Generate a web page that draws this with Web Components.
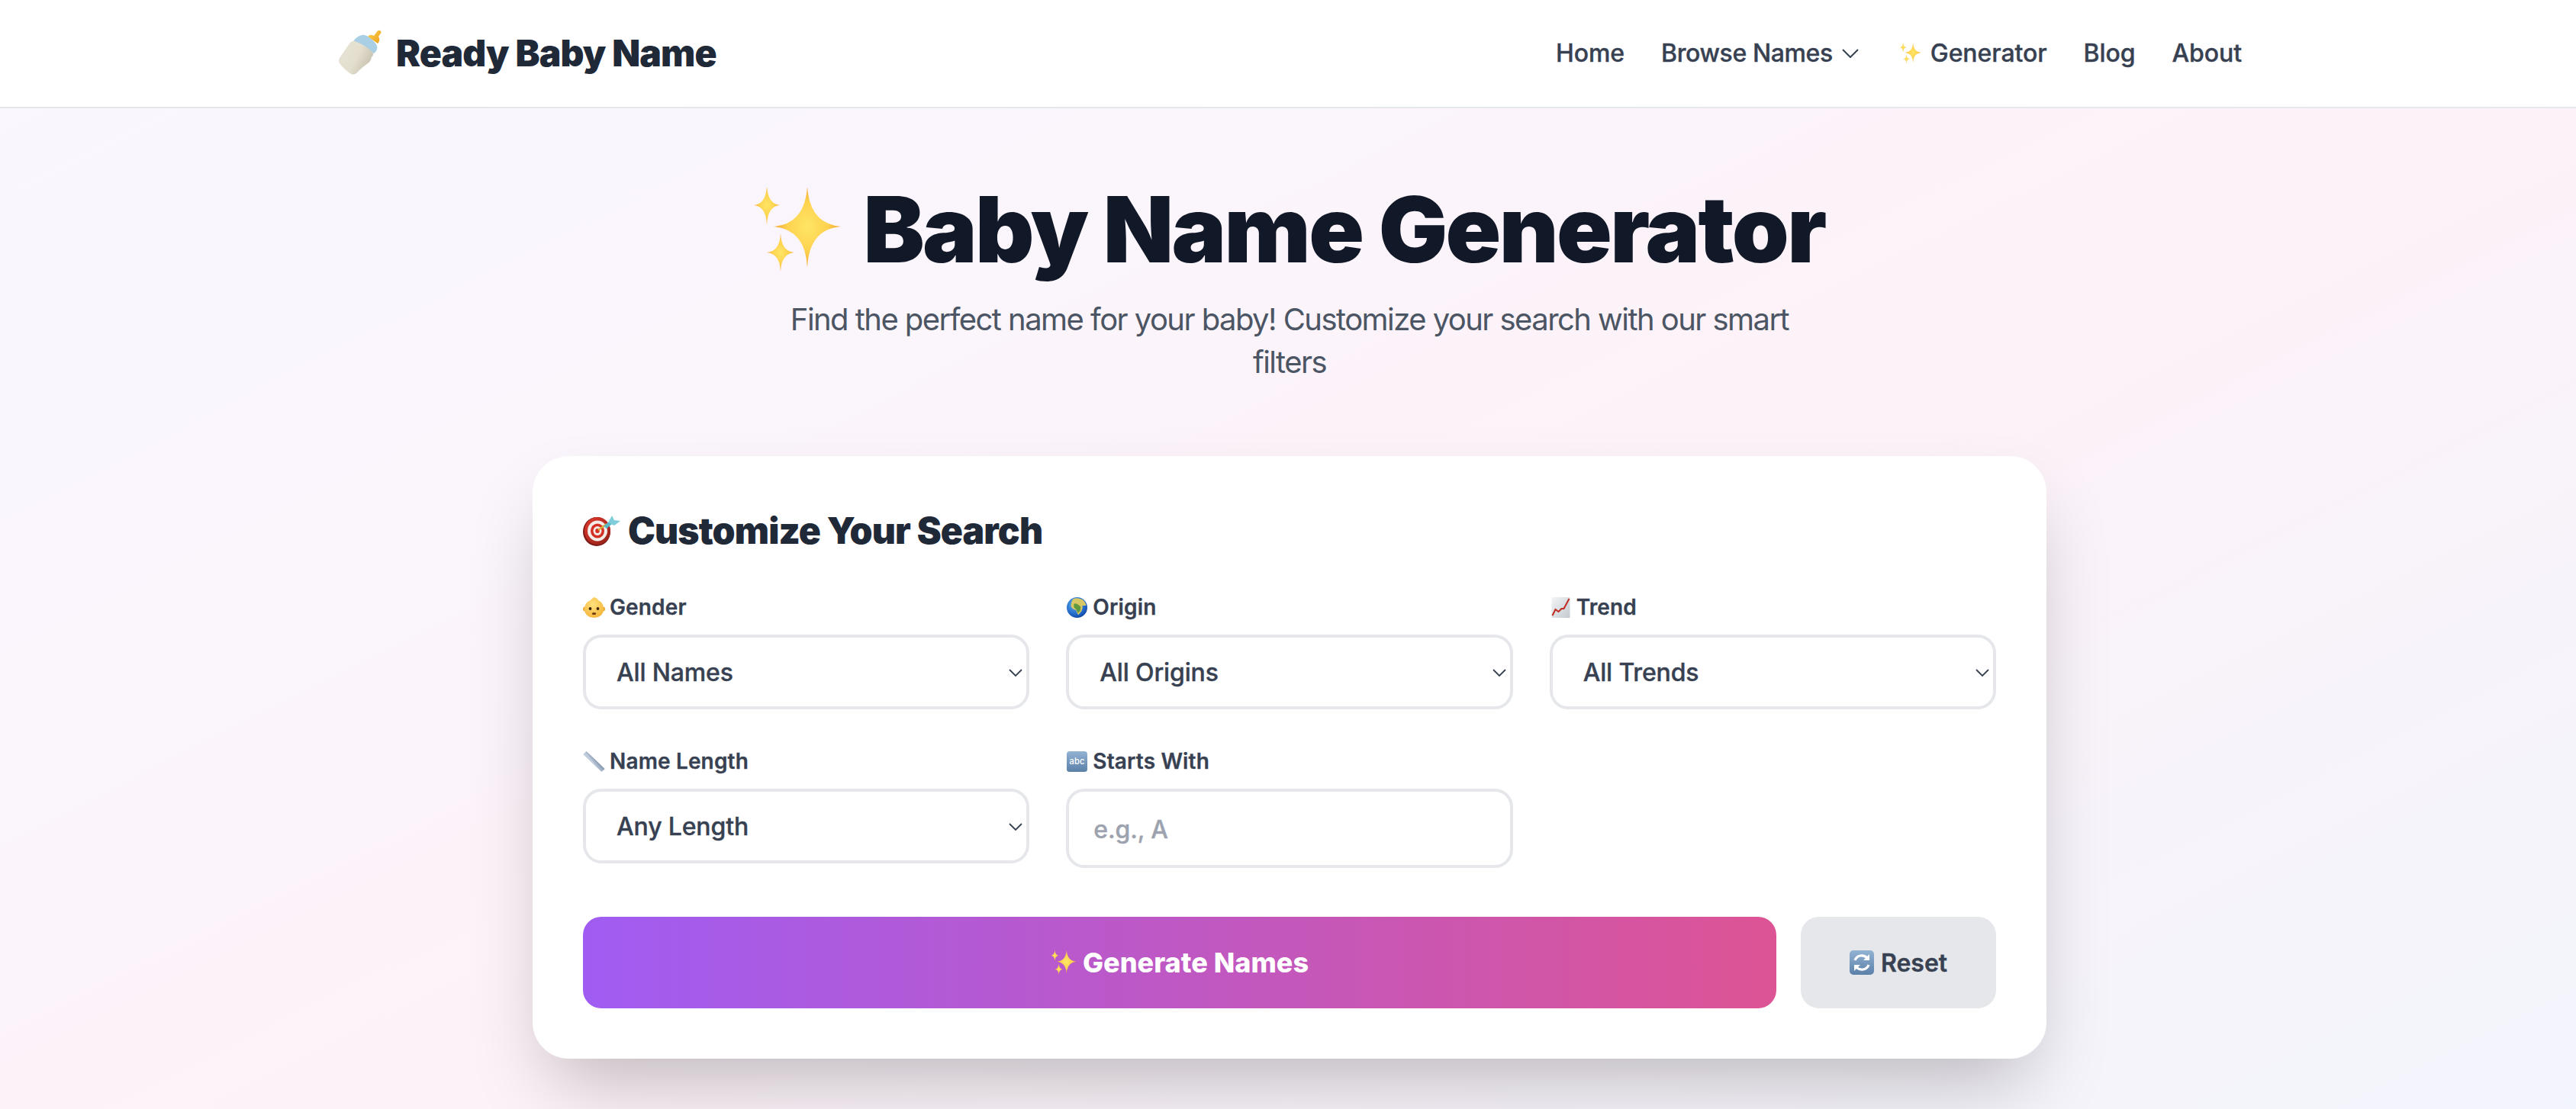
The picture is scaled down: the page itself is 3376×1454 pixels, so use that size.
<!DOCTYPE html>
<html lang="en"><head><meta charset="utf-8"><title>Ready Baby Name</title>
<style>
html,body{margin:0;height:100%;overflow:hidden}
body{font-family:Inter,"Noto Sans",sans-serif;background:linear-gradient(to bottom right,#f9f7ff,#fbf5fc 30%,#fdf2f8 50%,#f1f5fd) no-repeat;background-size:100% 1700px;background-color:#f3f4f9;color:#1f2937}
rb-main{display:block;padding-left:4px}
</style></head><body>
<rb-header></rb-header>
<rb-main>
<rb-hero></rb-hero>
<rb-card title-text="Customize Your Search" icon="dart">
  <rb-select label="Gender" icon="baby" value="All Names"></rb-select>
  <rb-select label="Origin" icon="globe" value="All Origins"></rb-select>
  <rb-select label="Trend" icon="chart" value="All Trends"></rb-select>
  <rb-select label="Name Length" icon="ruler" value="Any Length"></rb-select>
  <rb-text-field label="Starts With" icon="abc" placeholder="e.g., A"></rb-text-field>
  <rb-button slot="actions" kind="primary" icon="sparkles" text="Generate Names"></rb-button>
  <rb-button slot="actions" kind="secondary" icon="refresh" text="Reset"></rb-button>
</rb-card>
</rb-main>
<script>
const star=(c,x,y,rx,ry)=>{const a=rx*.05,b=ry*.07;return `<path fill="${c}" d="M${x} ${y-ry}Q${x+a} ${y-b} ${x+rx} ${y}Q${x+a} ${y+b} ${x} ${y+ry}Q${x-a} ${y+b} ${x-rx} ${y}Q${x-a} ${y-b} ${x} ${y-ry}Z"/>`};
const ICONS={
sparkles:{vb:'0 0 114 110',s:`<defs><radialGradient id="g" cx=".5" cy=".5" r=".55"><stop offset="0" stop-color="#ffe566"/><stop offset=".55" stop-color="#fdd24e"/><stop offset="1" stop-color="#f39a2d"/></radialGradient></defs>${star('url(#g)',70,51,44,54)}${star('url(#g)',17,23,17,26)}${star('url(#g)',35,85,18,25)}`},
bottle:{vb:'0 0 57 59',s:`<defs><linearGradient id="b" x1="0" y1="0" x2="1" y2=".5"><stop offset="0" stop-color="#e9e5d8"/><stop offset=".6" stop-color="#e3decd"/><stop offset="1" stop-color="#c9c4b2"/></linearGradient><linearGradient id="y" x1="0" y1="0" x2="1" y2="1"><stop offset="0" stop-color="#fad34a"/><stop offset="1" stop-color="#eb9e1e"/></linearGradient></defs>
<path fill="url(#y)" d="M39 9Q42 5 47 8L50 4Q52 0 55 1Q58 3 55 6L53 9Q56 14 52 18Z"/>
<path fill="#a9cfe4" d="M20 15Q24 9 31 7Q36 6 42 11Q49 16 51 21Q52 25 50 28L47 31Q36 22 20 15Z"/>
<path fill="url(#b)" d="M2 37L15 18Q18 14 22 15Q36 20 46 30Q47 33 44 36Q43 41 39 44Q31 50 27 54Q22 60 17 58Q8 52 2 44Q0 41 2 37Z"/>`},
dart:{vb:'0 0 49 40',s:`<defs><linearGradient id="d" x1="0" y1="0" x2="1" y2="1"><stop offset="0" stop-color="#e23a2d"/><stop offset="1" stop-color="#8f1f18"/></linearGradient></defs>
<ellipse cx="18" cy="21" rx="18" ry="19" fill="#7e1a15"/><ellipse cx="19" cy="20" rx="17" ry="18" fill="url(#d)"/><ellipse cx="19" cy="20" rx="13" ry="13.5" fill="#f4ece8"/><ellipse cx="19" cy="20" rx="9" ry="9.5" fill="#d42f25"/><ellipse cx="19" cy="20" rx="5.5" ry="6" fill="#f4ece8"/><ellipse cx="19" cy="20" rx="2.8" ry="3" fill="#d42f25"/>
<path d="M20 19L31 11" stroke="#d9b13c" stroke-width="2.4"/><path d="M27 14L34 8L38 11L31 17Z" fill="#58b7c9"/><path d="M33 9L38 0L41 6L49 7L41 13Z" fill="#7fcdd8"/>`},
baby:{vb:'0 0 29 27',s:`<defs><radialGradient id="f" cx=".45" cy=".35" r=".7"><stop offset="0" stop-color="#ffe27d"/><stop offset="1" stop-color="#f4b43a"/></radialGradient></defs>
<ellipse cx="2.500" cy="15.500" rx="2.500" ry="3" fill="#f0ac38"/><ellipse cx="26.500" cy="15.500" rx="2.500" ry="3" fill="#f0ac38"/><path fill="url(#f)" d="M14.500 0Q19 1 20 4Q27 7 27 15Q27 26 14.500 27Q2 26 2 15Q2 7 10 4Q12 1 14.500 0Z"/><circle cx="9.500" cy="15" r="1.900" fill="#3b2612"/><circle cx="19.500" cy="15" r="1.900" fill="#3b2612"/><ellipse cx="14.500" cy="21.500" rx="2.800" ry="1.500" fill="#6e3a12"/>`},
globe:{vb:'0 0 28 27',s:`<defs><radialGradient id="o" cx=".4" cy=".35" r=".75"><stop offset="0" stop-color="#5fb2ee"/><stop offset=".7" stop-color="#1f63c5"/><stop offset="1" stop-color="#0d3b8c"/></radialGradient></defs>
<ellipse cx="14" cy="13.500" rx="13.500" ry="13.500" fill="url(#o)"/><path fill="#d8c765" d="M9 2Q15 0 21 3Q25 6 26 11L21 11Q22 14 20 18L16 23Q14 22 13 17Q8 16 6 12Q6 6 9 2Z"/><path fill="#5f9a3e" d="M10 9Q13 7 17 11Q20 12 18 18L15 21Q14 17 12 15Q9 14 10 9Z"/>`},
chart:{vb:'0 0 24 27',s:`<defs><linearGradient id="p" x1="0" y1="0" x2="1" y2="1"><stop offset="0" stop-color="#f3f5f7"/><stop offset="1" stop-color="#c3c9cf"/></linearGradient></defs><rect width="24" height="27" fill="url(#p)"/><path d="M1 24L5 16L9 19L13 15L16 15L23 2" fill="none" stroke="#c02a22" stroke-width="2"/>`},
ruler:{vb:'0 0 28 27',s:`<path d="M0 4L4 0L28 23L24 27Z" fill="#a8b6c9"/><path d="M0 4L3 1L22 25L24 27Z" fill="#c2cddb"/><path d="M4 0L28 23L26 25L7 3Z" fill="#8ea1ba"/>`},
abc:{vb:'0 0 28 28',s:`<defs><linearGradient id="a" x1="0" y1="0" x2="0" y2="1"><stop offset="0" stop-color="#93b3d3"/><stop offset="1" stop-color="#5b80a8"/></linearGradient></defs><rect width="28" height="28" rx="4" fill="url(#a)"/><text x="14" y="18" font-family="Inter,sans-serif" font-size="11.500" font-weight="500" text-anchor="middle" fill="#fff">abc</text>`},
refresh:{vb:'0 0 32 32',s:`<defs><linearGradient id="r" x1="0" y1="0" x2="0" y2="1"><stop offset="0" stop-color="#93b3d3"/><stop offset="1" stop-color="#5b80a8"/></linearGradient></defs><rect width="32" height="32" rx="5" fill="url(#r)"/><g fill="none" stroke="#fff" stroke-width="3.200"><path d="M7 13A9.500 9.500 0 0 1 23 10"/><path d="M25 19A9.500 9.500 0 0 1 9 22"/></g><path fill="#fff" d="M26 5V13H18Z"/><path fill="#fff" d="M6 27V19H14Z"/>`}
};
class RbIcon extends HTMLElement{connectedCallback(){const i=ICONS[this.getAttribute('name')];const r=this.shadowRoot||this.attachShadow({mode:'open'});r.innerHTML=`<style>:host{display:inline-flex;flex:none;width:var(--w);height:var(--h)}svg{width:100%;height:100%;display:block}</style><svg viewBox="${i.vb}" aria-hidden="true">${i.s}</svg>`}}
customElements.define('rb-icon',RbIcon);

class RbHeader extends HTMLElement{constructor(){super();this.attachShadow({mode:'open'}).innerHTML=`<style>
:host{display:block;background:#fff;border-bottom:2px solid #e5e7eb}
.in{max-width:2496px;height:140px;margin:0 auto;display:flex;align-items:center;justify-content:space-between}
.logo{display:flex;align-items:center;gap:19px;font-size:48px;font-weight:900;color:#1f2937;letter-spacing:-.85px;margin-left:3px}
.logo span{padding-bottom:2px}
.logo rb-icon{--w:57px;--h:59px;margin-bottom:4px}
nav{display:flex;gap:48px;align-items:center;font-size:32px;font-weight:500;-webkit-text-stroke:.35px #374151;color:#374151;line-height:48px;margin-right:-2px;letter-spacing:-.08px}
a{color:inherit;text-decoration:none;display:flex;align-items:center}
.g rb-icon{--w:28px;--h:32px;margin-right:12px}
.b{letter-spacing:-.4px}
.c{margin-left:12px;margin-right:6px;width:22px;height:12px}
</style><div class="in"><a class="logo" href="#"><rb-icon name="bottle"></rb-icon><span>Ready Baby Name</span></a>
<nav><a href="#">Home</a><a class="b" href="#">Browse Names<svg class="c" viewBox="0 0 22 12" fill="none" stroke="#374151" stroke-width="2"><path d="M1 1L11 11L21 1"/></svg></a><a class="g" href="#"><rb-icon name="sparkles"></rb-icon>Generator</a><a href="#">Blog</a><a href="#">About</a></nav></div>`}}
customElements.define('rb-header',RbHeader);

class RbHero extends HTMLElement{constructor(){super();this.attachShadow({mode:'open'}).innerHTML=`<style>
:host{display:block;padding-top:96px;text-align:center}
h1{margin:0 0 27px;font-size:120px;line-height:126px;font-weight:900;color:#111827;display:flex;justify-content:center;align-items:center;gap:29px;letter-spacing:-2.6px}
h1 rb-icon{--w:114px;--h:110px}
p{margin:0 auto;max-width:1344px;font-size:40px;line-height:56px;color:#4b5563;letter-spacing:-1.55px}
</style><h1><rb-icon name="sparkles"></rb-icon><span>Baby Name Generator</span></h1><p>Find the perfect name for your baby! Customize your search with our smart filters</p>`}}
customElements.define('rb-hero',RbHero);

class RbCard extends HTMLElement{connectedCallback(){this.attachShadow({mode:'open'}).innerHTML=`<style>
:host{display:block;box-sizing:border-box;width:1984px;margin:95px auto 0;background:#fff;border:2px solid #fff;border-radius:48px;padding:64px;box-shadow:0 50px 100px -24px rgba(0,0,0,.25)}
h2{margin:0 0 48px;display:flex;align-items:center;gap:10px;font-size:48px;line-height:64px;font-weight:900;color:#1f2937;letter-spacing:-.85px}
h2 rb-icon{--w:49px;--h:40px}
.grid{display:grid;grid-template-columns:repeat(3,1fr);gap:48px}
.act{display:flex;gap:32px;margin-top:64px}
</style><h2><rb-icon name="${this.getAttribute('icon')}"></rb-icon><span>${this.getAttribute('title-text')}</span></h2><div class="grid"><slot></slot></div><div class="act"><slot name="actions"></slot></div>`}}
customElements.define('rb-card',RbCard);

const fieldCss=`:host{display:block}
label{display:flex;align-items:center;gap:6px;font-size:28px;line-height:40px;font-weight:600;-webkit-text-stroke:.3px #374151;color:#374151;letter-spacing:.15px;margin-bottom:16px;white-space:nowrap}
label rb-icon{--w:29px;--h:27px}
.box{position:relative}
select,input{display:block;box-sizing:border-box;width:100%;border:4px solid #e5e7eb;border-radius:24px;background:#fff;font:500 32px Inter,sans-serif;letter-spacing:-.15px;color:#374151;outline:none;margin:0}
select{appearance:none;height:98px;padding:0 40px;-webkit-text-stroke:.35px #374151}
input{height:104px;padding:2px 32px 0;-webkit-text-stroke:.35px #9ca3af}
input::placeholder{color:#9ca3af;opacity:1}
svg.c{position:absolute;right:9px;top:45px;width:18px;height:10px;pointer-events:none}`;
class RbSelect extends HTMLElement{connectedCallback(){const l=this.getAttribute('label'),v=this.getAttribute('value'),i=this.getAttribute('icon');this.attachShadow({mode:'open'}).innerHTML=`<style>${fieldCss}</style><label><rb-icon name="${i}"></rb-icon>${l}</label><div class="box"><select aria-label="${l}"><option>${v}</option></select><svg class="c" viewBox="0 0 18 10" fill="none" stroke="#374151" stroke-width="1.800"><path d="M1 1L9 9L17 1"/></svg></div>`}}
customElements.define('rb-select',RbSelect);
class RbTextField extends HTMLElement{connectedCallback(){const l=this.getAttribute('label'),p=this.getAttribute('placeholder'),i=this.getAttribute('icon');this.attachShadow({mode:'open'}).innerHTML=`<style>${fieldCss}</style><label><rb-icon name="${i}"></rb-icon>${l}</label><div class="box"><input type="text" placeholder="${p}" aria-label="${l}"></div>`}}
customElements.define('rb-text-field',RbTextField);
class RbButton extends HTMLElement{connectedCallback(){const k=this.getAttribute('kind');this.attachShadow({mode:'open'}).innerHTML=`<style>
:host{display:block;${k==='primary'?'flex:1':'flex:none;width:256px'}}
button{width:100%;height:120px;border:0;border-radius:24px;display:flex;align-items:center;justify-content:center;font-family:Inter,sans-serif;margin:0;padding:0;cursor:pointer}
.primary{background:linear-gradient(to right,#a05cf2,#dd5495);color:#fff;font-size:36px;font-weight:800;gap:8px;letter-spacing:0}
.primary rb-icon{--w:34px;--h:32px}
.secondary{background:#e5e7eb;color:#374151;font-size:32px;font-weight:600;-webkit-text-stroke:.35px #374151;gap:9px}
.secondary rb-icon{--w:32px;--h:32px}
</style><button class="${k}" type="button"><rb-icon name="${this.getAttribute('icon')}"></rb-icon>${this.getAttribute('text')}</button>`}}
customElements.define('rb-button',RbButton);
</script>
</body></html>
